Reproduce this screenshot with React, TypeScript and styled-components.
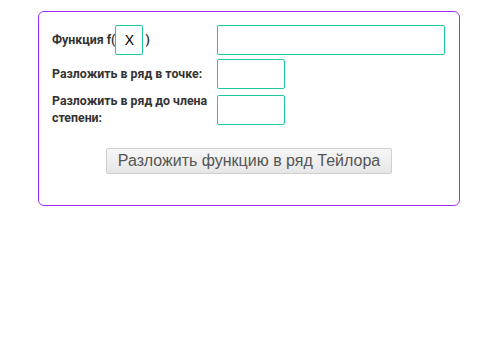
import styled, { createGlobalStyle } from 'styled-components';

const GlobalStyle = createGlobalStyle`
	body {
		margin: 8px;
		background: #ffffff;
		font-family: 'Liberation Sans', Arial, sans-serif;
	}
`;

const Panel = styled.div`
	box-sizing: border-box;
	width: 422px;
	margin: 3px 0 0 30px;
	padding: 13px 13px 31px 13px;
	border: 1px solid #a42cf2;
	border-radius: 6px;
`;

const Form = styled.div`
	display: grid;
	grid-template-columns: 165px 1fr;
	row-gap: 4px;
	align-items: center;
`;

const Label = styled.div`
	font-family: Roboto, 'Noto Sans', sans-serif;
	font-weight: bold;
	font-size: 12.35px;
	line-height: 17px;
	color: #333333;
	display: flex;
	align-items: center;
`;

const Field = styled.input<{ $w?: number }>`
	box-sizing: border-box;
	width: ${(p) => (p.$w ? `${p.$w}px` : '100%')};
	height: 30px;
	margin: 0;
	padding: 0 4px;
	border: 1px solid #1ec89c;
	border-radius: 2px;
	outline: none;
	font-family: 'Liberation Sans', Arial, sans-serif;
	font-size: 14px;
	color: #000;
	background: #fff;
`;

const VarField = styled(Field)`
	text-align: center;
	margin: 0 2px 0 0;
`;

const ButtonRow = styled.div`
	display: flex;
	justify-content: center;
	margin-top: 21px;
`;

const Button = styled.button`
	box-sizing: border-box;
	height: 26px;
	padding: 0 11px;
	border: 1px solid #cfcfcf;
	border-radius: 2px;
	background: linear-gradient(#f7f7f7, #e6e6e6);
	font-family: 'Liberation Sans', Arial, sans-serif;
	font-size: 16px;
	color: #555555;
`;

const App = () => {
	return (
		<>
			<GlobalStyle />
			<Panel>
				<Form>
					<Label>
						Функция f(
						<VarField $w={28} defaultValue='X' />)
					</Label>
					<Field $w={228} />
					<Label>Разложить в ряд в точке:</Label>
					<Field $w={68} />
					<Label>
						Разложить в ряд до члена
						<br />
						степени:
					</Label>
					<Field $w={68} />
				</Form>
				<ButtonRow>
					<Button>Разложить функцию в ряд Тейлора</Button>
				</ButtonRow>
			</Panel>
		</>
	);
};

export default App;
